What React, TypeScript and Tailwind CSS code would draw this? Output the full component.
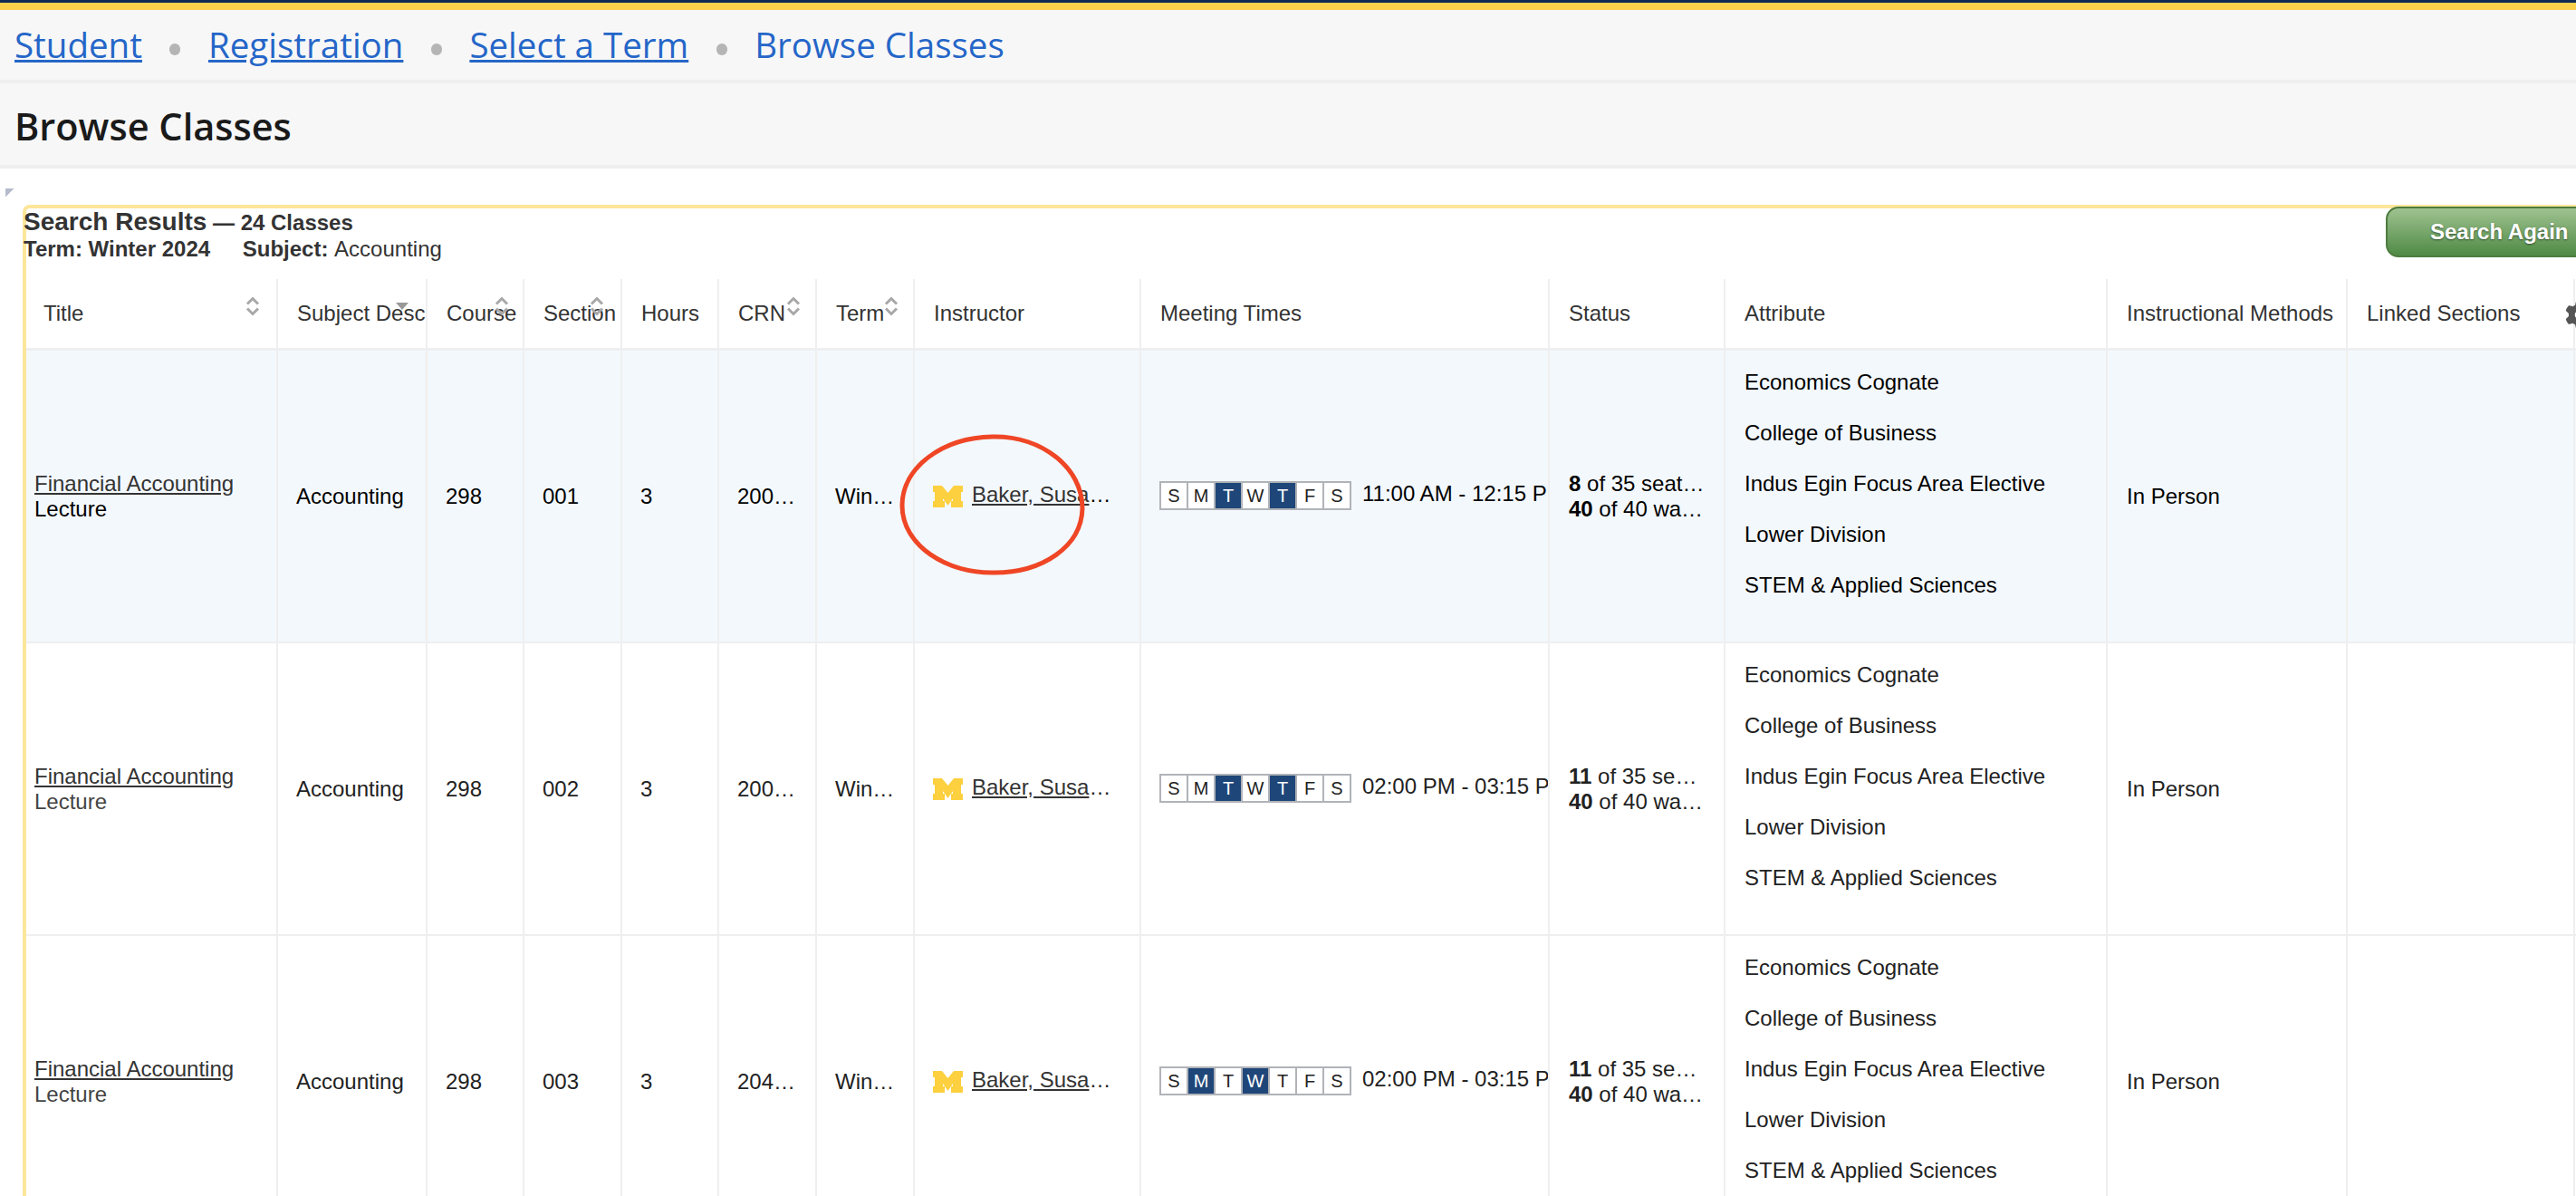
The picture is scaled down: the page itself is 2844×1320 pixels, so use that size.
import { FaGear } from 'react-icons/fa6';

const rowGrid =
  'grid grid-cols-[278px_165px_107px_108px_107px_108px_108px_250px_451px_194px_422px_265px_251px]';

const headers = [
  { label: 'Title', sort: 'both', pos: 'left-[242px] top-[19px]' },
  { label: 'Subject Desc', sort: 'down', pos: 'left-[130px] top-[26px]' },
  { label: 'Course', sort: 'both', pos: 'left-[74px] top-[19px]' },
  { label: 'Section', sort: 'both', pos: 'left-[72px] top-[19px]' },
  { label: 'Hours' },
  { label: 'CRN', sort: 'both', pos: 'left-[74px] top-[19px]' },
  { label: 'Term', sort: 'both', pos: 'left-[74px] top-[19px]' },
  { label: 'Instructor' },
  { label: 'Meeting Times' },
  { label: 'Status' },
  { label: 'Attribute' },
  { label: 'Instructional Methods' },
  { label: 'Linked Sections' },
];

const attributes = [
  'Economics Cognate',
  'College of Business',
  'Indus Egin Focus Area Elective',
  'Lower Division',
  'STEM & Applied Sciences',
];

const rows = [
  { section: '001', crn: '20034', days: [2, 4], time: '11:00 AM - 12:15 PM', seats: '8', hovered: true },
  { section: '002', crn: '20035', days: [2, 4], time: '02:00 PM - 03:15 PM', seats: '11', hovered: false },
  { section: '003', crn: '20412', days: [1, 3], time: '02:00 PM - 03:15 PM', seats: '11', hovered: false },
];

function SortIcon() {
  return (
    <svg width="16" height="22" viewBox="0 0 16 22" fill="none" stroke="#a8a8a8" strokeWidth="3">
      <path d="M2 8.5 L8 2.5 L14 8.5" />
      <path d="M2 13.5 L8 19.5 L14 13.5" />
    </svg>
  );
}

function Header() {
  return (
    <div className={`${rowGrid} h-[79px] border-b-[3px] border-[#efefef] text-[24px] text-[#333]`}>
      {headers.map((h) => (
        <div
          key={h.label}
          className="relative flex items-center overflow-hidden whitespace-nowrap border-r-2 border-[#efefef] pl-[21px] first:pl-[19px]"
        >
          {h.label}
          {h.sort === 'both' && (
            <span className={`absolute ${h.pos}`}>
              <SortIcon />
            </span>
          )}
          {h.sort === 'down' && (
            <span className={`absolute h-0 w-0 border-x-[7px] border-t-[8px] border-x-transparent border-t-[#999] ${h.pos}`} />
          )}
        </div>
      ))}
    </div>
  );
}

function Row({ r }: { r: (typeof rows)[number] }) {
  const cell = 'flex items-center border-r-2 border-[#efefef] pl-[20px] overflow-hidden';
  const text = r.hovered ? 'text-black' : 'text-[#222]';
  return (
    <div className={`${rowGrid} h-[323px] border-b-2 border-[#efefef] text-[24px] leading-[28px] ${text} ${r.hovered ? 'bg-[#f3f8fc]' : 'bg-white'}`}>
      <div className={`${cell} !pl-[9px]`}>
        <div>
          <a className="block underline text-[#333]">Financial Accounting</a>
          <div className={r.hovered ? 'text-black' : 'text-[#444]'}>Lecture</div>
        </div>
      </div>
      <div className={cell}>Accounting</div>
      <div className={cell}>298</div>
      <div className={cell}>{r.section}</div>
      <div className={cell}>3</div>
      <div className={cell}>
        <span className="w-[66px] truncate">{r.crn}</span>
      </div>
      <div className={cell}>
        <span className="w-[66px] truncate">Winter 2024</span>
      </div>
      <div className={cell}>
        <svg width="33" height="24" viewBox="0 0 33 24" className="mr-[10px] shrink-0" fill="#fcd03f">
          <path d="M0 0 H10 L16.5 8 L23 0 H33 V7 H31 V17 H33 V24 H20 V17 H22 V14 L16.5 22 L11 14 V17 H13 V24 H0 V17 H2 V7 H0 Z" />
        </svg>
        <span className="-mt-[3px] w-[155px] truncate">
          <a className="underline text-[#333]">Baker, Susan L</a>
        </span>
      </div>
      <div className={`${cell} whitespace-nowrap`}>
        <div className="-mt-[2px] mr-[12px] flex h-[32px] w-[212px] shrink-0 border-2 border-[#b0b3b8] bg-white text-[20px] leading-[28px]">
          {['S', 'M', 'T', 'W', 'T', 'F', 'S'].map((d, i) => (
            <span
              key={i}
              className={`flex-1 border-r-2 border-[#b0b3b8] text-center last:border-r-0 ${r.days.includes(i) ? 'bg-[#1f4679] text-white' : 'text-[#222]'}`}
            >
              {d}
            </span>
          ))}
        </div>
        <span className="-mt-[5px]">{r.time}</span>
      </div>
      <div className={`${cell} !pl-[21px]`}>
        <div className="w-[152px]">
          <div className="truncate">
            <b>{r.seats}</b> of 35 seats remain
          </div>
          <div className="truncate">
            <b>40</b> of 40 waitlist seats
          </div>
        </div>
      </div>
      <div className={`${cell} !pl-[21px]`}>
        <div>
          {attributes.map((a) => (
            <div key={a} className="mb-[28px]">
              {a}
            </div>
          ))}
        </div>
      </div>
      <div className={`${cell} !pl-[21px]`}>In Person</div>
      <div className={`${cell} border-r-0`} />
    </div>
  );
}

export default function App() {
  return (
    <div className="relative h-[1320px] w-[2844px] overflow-hidden bg-white font-['Liberation_Sans',Arial,sans-serif]">
      <div className="h-[3px] bg-[#0f2a52]" />
      <div className="h-[8px] bg-[#fbd04a]" />
      <nav className="flex h-[81px] items-center gap-[30.5px] border-b-4 border-[#efefef] bg-[#f7f7f7] pl-[16px] font-['Open_Sans',sans-serif] text-[38.5px] text-[#2566c8]">
        <a className="underline">Student</a>
        <span className="mt-[10px] h-[13px] w-[12px] rounded-full bg-[#b5b5b5]" />
        <a className="underline">Registration</a>
        <span className="mt-[10px] h-[13px] w-[12px] rounded-full bg-[#b5b5b5]" />
        <a className="underline">Select a Term</a>
        <span className="mt-[10px] h-[13px] w-[12px] rounded-full bg-[#b5b5b5]" />
        <span>Browse Classes</span>
      </nav>
      <div className="flex h-[94px] items-center border-b-4 border-[#efefef] bg-[#f7f7f7] pl-[16px] pt-[5px] font-['Open_Sans',sans-serif] text-[41.5px] font-semibold text-[#1a1a1a]">
        Browse Classes
      </div>

      <div className="pl-[6px] pt-[22px]">
        <span className="block h-[10px] w-[10px] bg-[linear-gradient(135deg,#b4bccb_50%,transparent_50%)]" />
      </div>

      <div className="ml-[25px] mt-[8px] w-[2900px] rounded-tl-[8px] border-l-4 border-t-4 border-[#fde69a]">
        <div className="flex h-[78px] items-start text-[#333]">
          <div className="-ml-[3px] w-[2608px] shrink-0 whitespace-nowrap font-bold leading-[29px]">
            <div className="text-[24px]">
              <span className="text-[28px]">Search Results</span> <span>— 24 Classes</span>
            </div>
            <div className="text-[24px]">
              Term: Winter 2024 <span className="ml-[29px]">Subject:</span> <span className="font-normal">Accounting</span>
            </div>
          </div>
          <button className="-mt-[2px] h-[56px] w-[260px] shrink-0 rounded-[14px] border-2 border-[#4d7c3f] bg-[linear-gradient(#9fc290,#4f8a45)] pl-[47px] text-left text-[24px] font-bold text-white [text-shadow:0_1px_2px_rgba(0,0,0,0.5)]">
            Search Again
          </button>
        </div>
        <div className="relative">
          <Header />
          <FaGear className="absolute left-[2803px] top-[24px] text-[31px] text-[#555]" />
        </div>
        {rows.map((r) => (
          <Row key={r.section} r={r} />
        ))}
      </div>

      {/* hand drawn annotation over the first instructor */}
      <svg className="absolute left-[990px] top-[476px]" width="212" height="162" viewBox="0 0 212 162" fill="none">
        <path
          d="M106 6 C160 5 205 40 205 85 C204 128 160 156 108 156 C55 157 6 126 6 82 C6 40 50 7 106 6 Z"
          stroke="#ef4626"
          strokeWidth="5"
        />
      </svg>
    </div>
  );
}
